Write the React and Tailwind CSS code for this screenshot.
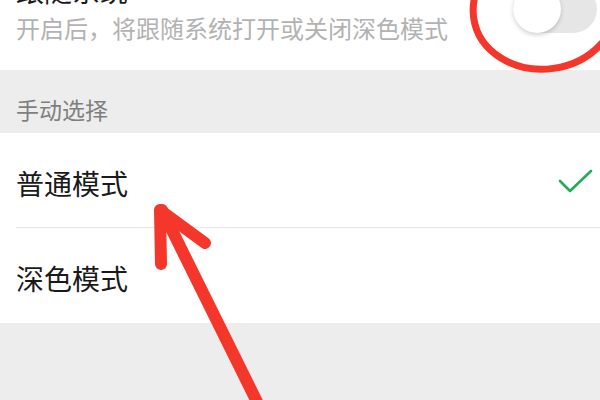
import React from 'react';

const cjk = { fontFamily: '"Noto Sans CJK SC", "Noto Sans", sans-serif' };

function Toggle() {
  return (
    <div className="w-[84px] h-[48px] rounded-full bg-[#e6e6e6] flex items-center shrink-0">
      <div className="w-[48px] h-[48px] rounded-full bg-white shadow-[0_2px_4px_rgba(0,0,0,0.18)]" />
    </div>
  );
}

function OptionRow({ label, checked, divider }) {
  return (
    <div className="relative h-[95px] flex items-center justify-between pl-4 pr-[6px]">
      <span className="text-[28px] leading-none text-[#1a1a1a] pt-[4px]">{label}</span>
      {checked && (
        <svg width="36" height="26" viewBox="0 0 36 26" fill="none" className="mb-[-2px]">
          <path d="M2 12 L12 22 L33 2" stroke="#1fae55" strokeWidth="2.6" strokeLinecap="round" strokeLinejoin="round" />
        </svg>
      )}
      {divider && <div className="absolute left-4 right-0 bottom-0 h-px bg-[#e6e6e6]" />}
    </div>
  );
}

export default function App() {
  return (
    <div className="relative w-[600px] h-[400px] overflow-hidden bg-[#ededed]" style={cjk}>
      {/* 跟随系统 */}
      <div className="h-[70px] bg-white overflow-hidden">
        <div className="mt-[-24px] flex justify-between pl-4 pr-[3px]">
          <div>
            <div className="text-[28px] leading-[28px] text-[#1a1a1a]">跟随系统</div>
            <div className="mt-[6px] text-[24px] leading-[36px] text-[#b2b2b2]">开启后，将跟随系统打开或关闭深色模式</div>
          </div>
          <div className="mt-[9px]">
            <Toggle />
          </div>
        </div>
      </div>

      {/* 手动选择 */}
      <div className="h-[63px] flex items-end pl-4 pb-[10px]">
        <span className="text-[23px] leading-[28px] text-[#7f7f7f]">手动选择</span>
      </div>

      <div className="bg-white">
        <OptionRow label="普通模式" checked divider />
        <OptionRow label="深色模式" />
      </div>

      {/* annotations */}
      <svg className="absolute inset-0 pointer-events-none" width="600" height="400" viewBox="0 0 600 400">
        <ellipse cx="545" cy="8" rx="72" ry="61" fill="none" stroke="#f5372b" strokeWidth="7" transform="rotate(-8 545 8)" />
        <g stroke="#f5372b" strokeWidth="12" strokeLinecap="round" strokeLinejoin="round" fill="none">
          <path d="M162 210 L262 412" />
          <path d="M161 264 L160 210 L205 243" />
        </g>
      </svg>
    </div>
  );
}
